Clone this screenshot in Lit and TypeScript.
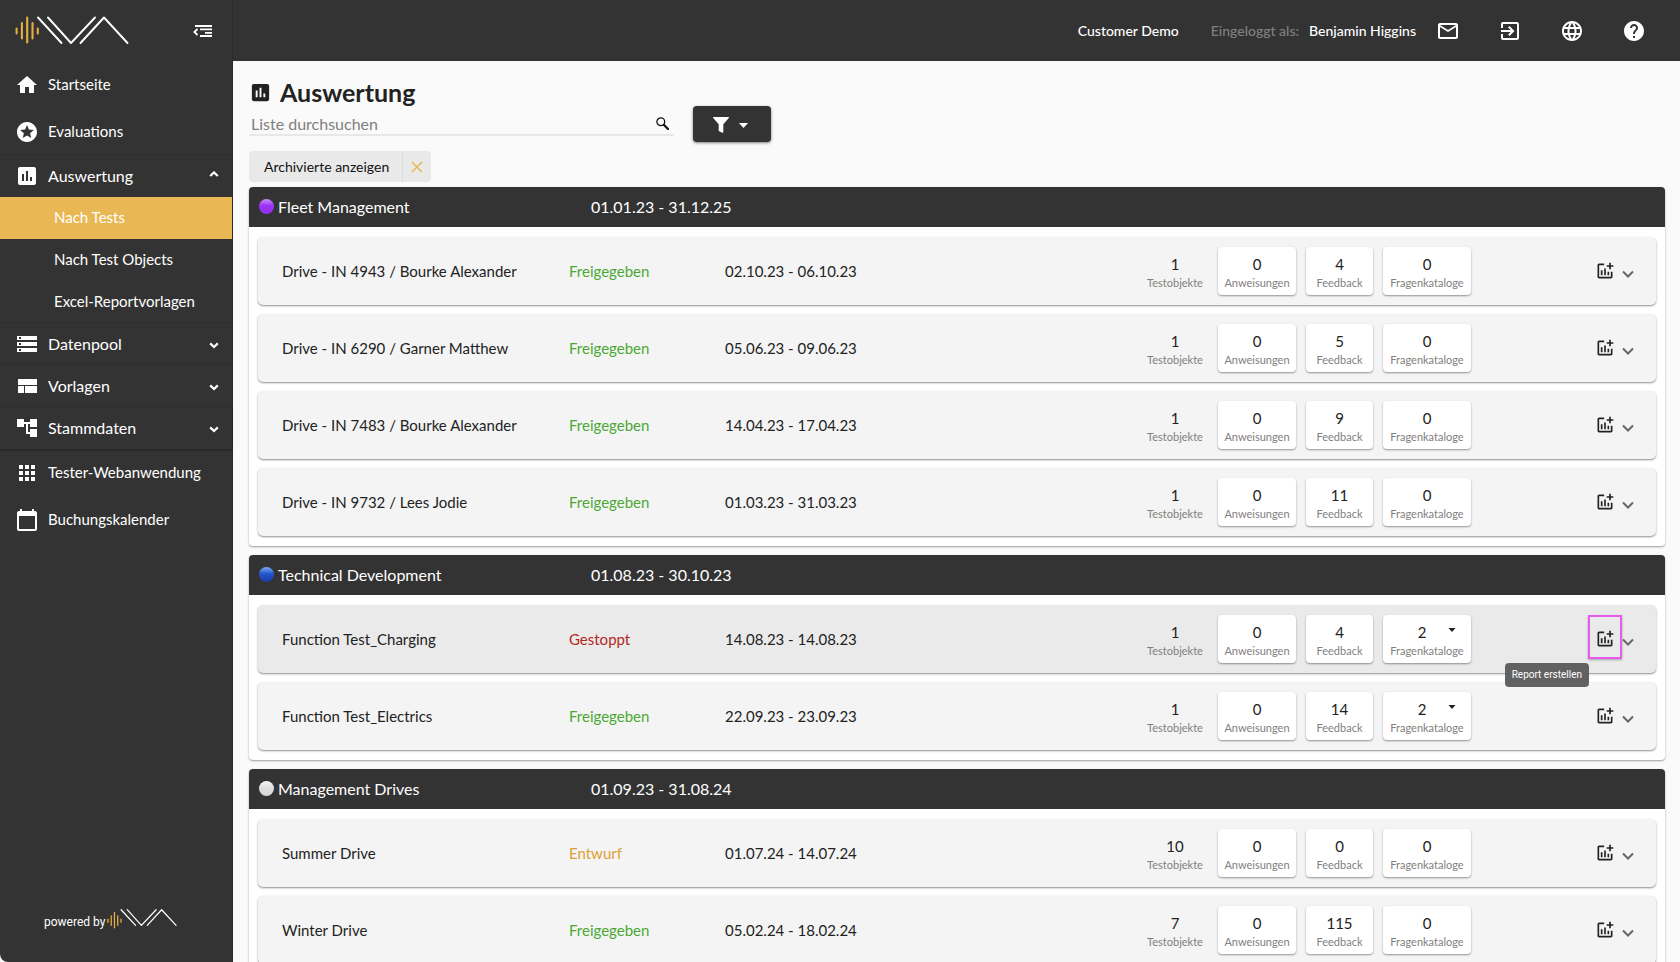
import { LitElement, html, svg, css, nothing } from "lit";
import { customElement, property } from "lit/decorators.js";
import { classMap } from "lit/directives/class-map.js";

const ICONS: Record<string, string> = {
  home: "M10 20v-6h4v6h5v-8h3L12 3 2 12h3v8z",
  stars:
    "M11.99 2C6.47 2 2 6.48 2 12s4.47 10 9.99 10C17.52 22 22 17.52 22 12S17.52 2 11.99 2zm4.24 16L12 15.45 7.77 18l1.12-4.81-3.73-3.23 4.92-.42L12 5l1.92 4.53 4.92.42-3.73 3.23L16.23 18z",
  assessment:
    "M19 3H5c-1.1 0-2 .9-2 2v14c0 1.1.9 2 2 2h14c1.1 0 2-.9 2-2V5c0-1.1-.9-2-2-2zM9 17H7v-7h2v7zm4 0h-2V7h2v10zm4 0h-2v-4h2v4z",
  storage:
    "M2 20h20v-4H2v4zm2-3h2v2H4v-2zM2 4v4h20V4H2zm4 3H4V5h2v2zm-4 7h20v-4H2v4zm2-3h2v2H4v-2z",
  layout: "M3 5h19v6H3zM3 12h6v7H3zM10 12h12v7H10z",
  tree: "M22 11V3h-7v3H9V3H2v8h7V8h2v10h4v3h7v-8h-7v3h-2V8h2v3z",
  apps: "M4 8h4V4H4v4zm6 12h4v-4h-4v4zm-6 0h4v-4H4v4zm0-6h4v-4H4v4zm6 0h4v-4h-4v4zm6-10v4h4V4h-4zm-6 4h4V4h-4v4zm6 6h4v-4h-4v4zm0 6h4v-4h-4v4z",
  calendar:
    "M20 3h-1V1h-2v2H7V1H5v2H4c-1.1 0-2 .9-2 2v16c0 1.1.9 2 2 2h16c1.1 0 2-.9 2-2V5c0-1.1-.9-2-2-2zm0 18H4V8h16v13z",
  mail: "M22 6c0-1.1-.9-2-2-2H4c-1.1 0-2 .9-2 2v12c0 1.1.9 2 2 2h16c1.1 0 2-.9 2-2V6zm-2 0l-8 5-8-5h16zm0 12H4V8l8 5 8-5v10z",
  exit: "M10.09 15.59L11.5 17l5-5-5-5-1.41 1.41L12.67 11H3v2h9.67l-2.58 2.59zM19 3H5c-1.11 0-2 .9-2 2v4h2V5h14v14H5v-4H3v4c0 1.1.89 2 2 2h14c1.1 0 2-.9 2-2V5c0-1.1-.9-2-2-2z",
  globe:
    "M11.99 2C6.47 2 2 6.48 2 12s4.47 10 9.99 10C17.52 22 22 17.52 22 12S17.52 2 11.99 2zm6.93 6h-2.95c-.32-1.25-.78-2.45-1.38-3.56 1.84.63 3.37 1.91 4.33 3.56zM12 4.04c.83 1.2 1.48 2.53 1.91 3.96h-3.82c.43-1.43 1.08-2.76 1.91-3.96zM4.26 14C4.1 13.36 4 12.69 4 12s.1-1.36.26-2h3.38c-.08.66-.14 1.32-.14 2 0 .68.06 1.34.14 2H4.26zm.82 2h2.95c.32 1.25.78 2.45 1.38 3.56-1.84-.63-3.37-1.9-4.33-3.56zm2.95-8H5.08c.96-1.66 2.49-2.93 4.33-3.56C8.81 5.55 8.35 6.75 8.03 8zM12 19.96c-.83-1.2-1.48-2.53-1.91-3.96h3.82c-.43 1.43-1.08 2.76-1.91 3.96zM14.34 14H9.66c-.09-.66-.16-1.32-.16-2 0-.68.07-1.35.16-2h4.68c.09.65.16 1.32.16 2 0 .68-.07 1.34-.16 2zm.25 5.56c.6-1.11 1.06-2.31 1.38-3.56h2.95c-.96 1.65-2.49 2.93-4.33 3.56zM16.36 14c.08-.66.14-1.32.14-2 0-.68-.06-1.34-.14-2h3.38c.16.64.26 1.31.26 2s-.1 1.36-.26 2h-3.38z",
  help: "M12 2C6.48 2 2 6.48 2 12s4.48 10 10 10 10-4.48 10-10S17.52 2 12 2zm1 17h-2v-2h2v2zm2.07-7.75l-.9.92C13.45 12.9 13 13.5 13 15h-2v-.5c0-1.1.45-2.1 1.17-2.83l1.24-1.26c.37-.36.59-.86.59-1.41 0-1.1-.9-2-2-2s-2 .9-2 2H8c0-2.21 1.79-4 4-4s4 1.79 4 4c0 .88-.36 1.68-.93 2.25z",
  addchart:
    "M22 5v2h-3v3h-2V7h-3V5h3V2h2v3h3zm-3 14H5V5h6V3H5c-1.1 0-2 .9-2 2v14c0 1.1.9 2 2 2h14c1.1 0 2-.9 2-2v-6h-2v6zm-4-6v4h2v-4h-2zm-4 4h2V9h-2v8zm-2 0v-6H7v6h2z",
};

const icon = (name: string, size = 24) => html`<svg
  width=${size}
  height=${size}
  viewBox="0 0 24 24"
  fill="currentColor"
  aria-hidden="true"
>
  <path d=${ICONS[name]}></path>
</svg>`;

const chevron = (up: boolean) => html`<svg
  width="10"
  height="10"
  viewBox="0 0 10 10"
  fill="none"
  stroke="currentColor"
  stroke-width="2.2"
  aria-hidden="true"
>
  <path d=${up ? "M1.2 5 5 1.4 8.8 5" : "M1.2 4.4 5 8 8.8 4.4"}></path>
</svg>`;

/** Brand mark: five sound bars followed by the zigzag strokes. */
const logo = (width: number, height: number, barShift: number, stroke: number) => html`<svg
  class="logo"
  width=${width}
  height=${height}
  viewBox="0 0 114 32"
  fill="none"
  stroke-linecap="round"
  stroke-linejoin="round"
  role="img"
  aria-label="Logo"
>
  ${svg`<g stroke="#e5ae43" stroke-width="2.1" transform="translate(0 ${barShift})">
    <path d="M1.6 13v5M6.9 7.500v15.500M12.200 2v25M17.500 7.500v15.500M22.800 13v5"></path>
  </g>
  <path stroke="#fff" stroke-width=${stroke} d="M23 2.500 46.500 28M33 2.500 56 28 80 2.500M65.500 28 89 2.500 112.500 28"></path>`}
</svg>`;

interface TestRow {
  name: string;
  status: "Freigegeben" | "Gestoppt" | "Entwurf";
  range: string;
  objects: number;
  instructions: number;
  feedback: number;
  catalogs: number;
  active?: boolean;
}

interface TestGroup {
  name: string;
  color: "purple" | "blue" | "white";
  range: string;
  rows: TestRow[];
}

const row = (
  name: string,
  status: TestRow["status"],
  range: string,
  objects: number,
  feedback: number,
  catalogs = 0,
  active = false
): TestRow => ({ name, status, range, objects, instructions: 0, feedback, catalogs, active });

const GROUPS: TestGroup[] = [
  {
    name: "Fleet Management",
    color: "purple",
    range: "01.01.23 - 31.12.25",
    rows: [
      row("Drive - IN 4943 / Bourke Alexander", "Freigegeben", "02.10.23 - 06.10.23", 1, 4),
      row("Drive - IN 6290 / Garner Matthew", "Freigegeben", "05.06.23 - 09.06.23", 1, 5),
      row("Drive - IN 7483 / Bourke Alexander", "Freigegeben", "14.04.23 - 17.04.23", 1, 9),
      row("Drive - IN 9732 / Lees Jodie", "Freigegeben", "01.03.23 - 31.03.23", 1, 11),
    ],
  },
  {
    name: "Technical Development",
    color: "blue",
    range: "01.08.23 - 30.10.23",
    rows: [
      row("Function Test_Charging", "Gestoppt", "14.08.23 - 14.08.23", 1, 4, 2, true),
      row("Function Test_Electrics", "Freigegeben", "22.09.23 - 23.09.23", 1, 14, 2),
    ],
  },
  {
    name: "Management Drives",
    color: "white",
    range: "01.09.23 - 31.08.24",
    rows: [
      row("Summer Drive", "Entwurf", "01.07.24 - 14.07.24", 10, 0),
      row("Winter Drive", "Freigegeben", "05.02.24 - 18.02.24", 7, 115),
    ],
  },
];

const shared = css`
  *,
  *::before,
  *::after {
    box-sizing: border-box;
  }
  button {
    font: inherit;
    color: inherit;
    background: none;
    border: 0;
    padding: 0;
    margin: 0;
    cursor: pointer;
  }
  a {
    color: inherit;
    text-decoration: none;
  }
  svg {
    display: block;
    flex: none;
  }
  ul {
    list-style: none;
    margin: 0;
    padding: 0;
  }
`;

@customElement("app-sidebar")
export class AppSidebar extends LitElement {
  static styles = [
    shared,
    css`
      :host {
        display: flex;
        flex-direction: column;
        background: #333;
        color: #fff;
        font-size: 15px;
        border-right: 1px solid #2a2a2a;
        border-bottom-left-radius: 8px;
      }
      .brand {
        display: flex;
        align-items: center;
        justify-content: space-between;
        height: 61px;
        padding: 0 20px 0 15px;
      }
      .item {
        display: flex;
        align-items: center;
        gap: 9px;
        width: 100%;
        height: 47px;
        padding: 0 13px 0 15px;
        text-align: left;
      }
      .text {
        flex: 1;
        padding-bottom: 2px;
      }
      .group {
        height: 42px;
        font-size: 16px;
        box-shadow: 0 -1px 1px rgba(0, 0, 0, 0.08);
      }
      .last {
        box-shadow: 0 -1px 1px rgba(0, 0, 0, 0.08), 0 2px 2px rgba(0, 0, 0, 0.25);
      }
      .sub {
        display: flex;
        align-items: center;
        height: 42px;
        padding: 0 0 2px 54px;
      }
      .current {
        background: #e9b855;
      }
      .powered {
        display: flex;
        align-items: flex-start;
        gap: 2px;
        margin-top: auto;
        padding: 0 0 26px 44px;
        font: 12px/28px Roboto, sans-serif;
      }
      .logo {
        overflow: visible;
      }
    `,
  ];

  private group(name: string, label: string, open = false, last = false) {
    return html`<button
      class=${classMap({ item: true, group: true, last })}
      aria-expanded=${open ? "true" : "false"}
    >
      ${icon(name)}<span class="text">${label}</span>${chevron(open)}
    </button>`;
  }

  private link(name: string, label: string) {
    return html`<a class="item" href="#">${icon(name)}<span class="text">${label}</span></a>`;
  }

  render() {
    return html`
      <div class="brand">
        ${logo(114, 32, 0.5, 1.9)}
        <button aria-label="Menü einklappen">
          <svg width="19" height="12" viewBox="0 0 19 12" fill="none" stroke="#fff" stroke-width="1.8">
            <path d="M2 1h17M7 4.400h12M12 7.800h7M7 11h12M4.500 4 1.400 7 4.500 10"></path>
          </svg>
        </button>
      </div>
      <nav>
        ${this.link("home", "Startseite")} ${this.link("stars", "Evaluations")}
        ${this.group("assessment", "Auswertung", true)}
        <a class="sub current" href="#" aria-current="page">Nach Tests</a>
        <a class="sub" href="#">Nach Test Objects</a>
        <a class="sub" href="#">Excel-Reportvorlagen</a>
        ${this.group("storage", "Datenpool")} ${this.group("layout", "Vorlagen")}
        ${this.group("tree", "Stammdaten", false, true)}
        ${this.link("apps", "Tester-Webanwendung")} ${this.link("calendar", "Buchungskalender")}
      </nav>
      <div class="powered"><span>powered by</span>${logo(70, 20, 5, 2)}</div>
    `;
  }
}

@customElement("app-topbar")
export class AppTopbar extends LitElement {
  static styles = [
    shared,
    css`
      :host {
        display: flex;
        align-items: center;
        justify-content: flex-end;
        height: 61px;
        padding-right: 34px;
        background: #333;
        color: #fff;
        font-size: 14px;
        font-weight: 500;
      }
      .user {
        display: flex;
        gap: 10px;
        margin: 0 20px 0 32px;
      }
      .muted {
        color: #808080;
      }
      .icons {
        display: flex;
        gap: 38px;
      }
    `,
  ];

  render() {
    return html`
      <span>Customer Demo</span>
      <div class="user"><span class="muted">Eingeloggt als:</span><span>Benjamin Higgins</span></div>
      <div class="icons">
        <button aria-label="Nachrichten">${icon("mail")}</button>
        <button aria-label="Abmelden">${icon("exit")}</button>
        <button aria-label="Sprache">${icon("globe")}</button>
        <button aria-label="Hilfe">${icon("help")}</button>
      </div>
    `;
  }
}

@customElement("test-group")
export class TestGroupElement extends LitElement {
  @property({ attribute: false }) group!: TestGroup;

  static styles = [
    shared,
    css`
      :host {
        display: block;
        background: #fff;
        border-radius: 4px;
        box-shadow: 0 1px 2px rgba(0, 0, 0, 0.38);
      }
      .head {
        display: grid;
        grid-template-columns: 312px 1fr;
        align-items: center;
        height: 40px;
        padding: 0 10px 2px;
        margin: 0;
        border-radius: 4px 4px 0 0;
        background: #333;
        color: #fff;
        font-size: 16px;
        font-weight: 400;
      }
      .title {
        display: flex;
        align-items: center;
        gap: 4px;
        margin: 0;
        font: inherit;
      }
      .head > span {
        padding-left: 20px;
      }
      .dot {
        width: 15px;
        height: 15px;
        border-radius: 50%;
      }
      .purple {
        background: linear-gradient(#c98df7, #9a33f5 45%, #9530f0);
      }
      .blue {
        background: linear-gradient(#7fb0f0, #2257d0 45%, #1b3aa5);
      }
      .white {
        background: linear-gradient(#f6f6f6, #dedede 45%, #d6d6d6);
      }
      .rows {
        display: flex;
        flex-direction: column;
        gap: 9px;
        padding: 10px 9px;
      }
      .row {
        display: grid;
        grid-template-columns: 287px 156px 1fr auto 185px;
        align-items: center;
        height: 68px;
        padding-left: 24px;
        border-radius: 5px;
        background: #f4f4f4;
        color: #222;
        font-size: 15px;
        box-shadow: 0 1px 2px rgba(0, 0, 0, 0.45);
      }
      .active {
        background: #eaeaea;
      }
      .freigegeben {
        color: #4ba834;
      }
      .gestoppt {
        color: #b5281e;
      }
      .entwurf {
        color: #dda032;
      }
      .stats {
        display: grid;
        grid-template-columns: 66px 78px 67px 88px;
        gap: 10px;
      }
      .stat {
        display: flex;
        flex-direction: column;
        align-items: center;
        height: 48px;
        padding-top: 8px;
        border-radius: 4px;
      }
      .card {
        background: #fff;
        box-shadow: 0 1px 2px rgba(0, 0, 0, 0.4);
      }
      .value {
        display: flex;
        align-items: flex-start;
        gap: 22px;
        line-height: 18px;
      }
      .caret {
        margin: 5px 2px 0 0;
      }
      .label {
        font-size: 11px;
        line-height: 20px;
        color: #808080;
      }
      .actions {
        display: flex;
        align-items: center;
        justify-content: flex-end;
        padding-right: 22px;
      }
      .report {
        position: relative;
        display: grid;
        place-items: center;
        width: 34px;
        height: 40px;
      }
      .frame {
        position: absolute;
        inset: -4px 0 0 0;
        border: 2px solid #e65aec;
        box-shadow: 0 1px 2px rgba(0, 0, 0, 0.3);
      }
      .tip {
        position: absolute;
        top: 44px;
        right: 33px;
        padding: 0 7px;
        border-radius: 4px;
        background: #616161;
        color: #fff;
        font: 10px/24px Roboto, sans-serif;
        white-space: nowrap;
        z-index: 1;
      }
      .toggle {
        padding-top: 6px;
        color: #666;
      }
    `,
  ];

  private stat(value: number, label: string, menu = false) {
    return html`<button class="stat card">
      <span class="value"
        >${menu ? html`<span></span>` : nothing}${value}${menu
          ? html`<svg class="caret" width="8" height="5" viewBox="0 0 8 5" aria-hidden="true">
              <path d="M.5 0h7L4 4z" fill="#222"></path>
            </svg>`
          : nothing}</span
      >
      <span class="label">${label}</span>
    </button>`;
  }

  private renderRow(r: TestRow) {
    return html`<li class=${classMap({ row: true, active: !!r.active })}>
      <span>${r.name}</span>
      <span class=${r.status.toLowerCase()}>${r.status}</span>
      <span>${r.range}</span>
      <div class="stats">
        <div class="stat">
          <span class="value">${r.objects}</span><span class="label">Testobjekte</span>
        </div>
        ${this.stat(r.instructions, "Anweisungen")} ${this.stat(r.feedback, "Feedback")}
        ${this.stat(r.catalogs, "Fragenkataloge", r.catalogs > 0)}
      </div>
      <div class="actions">
        <button class="report" aria-label="Report erstellen">
          ${icon("addchart", 20)}
          ${r.active
            ? html`<span class="frame"></span><span class="tip" role="tooltip">Report erstellen</span>`
            : nothing}
        </button>
        <button class="toggle" aria-label="Aufklappen">
          <svg width="12" height="8" viewBox="0 0 12 8" fill="none" stroke="currentColor" stroke-width="2">
            <path d="M1 1.500 6 6.500 11 1.500"></path>
          </svg>
        </button>
      </div>
    </li>`;
  }

  render() {
    const g = this.group;
    return html`
      <header class="head">
        <h2 class="title"><i class="dot ${g.color}"></i>${g.name}</h2>
        <span>${g.range}</span>
      </header>
      <ul class="rows">
        ${g.rows.map((r) => this.renderRow(r))}
      </ul>
    `;
  }
}

@customElement("app-root")
export class AppRoot extends LitElement {
  static styles = [
    shared,
    css`
      :host {
        display: grid;
        grid-template-columns: 233px minmax(0, 1fr);
        grid-template-rows: auto minmax(0, 1fr);
        height: 100vh;
        overflow: hidden;
        background: #fafafa;
        font-family: Lato, "Noto Sans", sans-serif;
        color: #222;
      }
      .side {
        grid-row: 1 / 3;
      }
      .main {
        overflow: auto;
        scrollbar-width: none;
        padding: 17px 15px 16px 16px;
      }
      .heading {
        display: flex;
        align-items: center;
        gap: 8px;
        margin: 0;
        font-size: 25px;
        line-height: 28px;
        font-weight: 700;
      }
      .tools {
        display: flex;
        align-items: flex-start;
        gap: 19px;
      }
      .search {
        display: flex;
        align-items: center;
        width: 425px;
        height: 30px;
        padding: 6px 5px 0 2px;
        border-bottom: 2px solid #e8e8e8;
      }
      .field {
        flex: 1;
        min-width: 0;
        border: 0;
        padding: 0;
        outline: 0;
        background: none;
        font: inherit;
        font-size: 16px;
      }
      .field::placeholder {
        color: #808080;
        opacity: 1;
      }
      .filter {
        display: flex;
        align-items: center;
        justify-content: center;
        gap: 10px;
        width: 78px;
        height: 36px;
        padding: 2px 3px 0 0;
        border-radius: 4px;
        background: #333;
        color: #fff;
        box-shadow: 0 1px 3px rgba(0, 0, 0, 0.5);
      }
      .chip {
        display: inline-flex;
        align-items: center;
        height: 31px;
        margin: 9px 0 5px;
        border-radius: 4px;
        background: #e9e9e9;
        color: #111;
        font-size: 14px;
        vertical-align: top;
      }
      .chip span {
        padding: 0 13px 0 15px;
      }
      .remove {
        display: grid;
        place-items: center;
        width: 29px;
        height: 31px;
        border-left: 1px solid #dcdcdc;
      }
      .groups {
        display: flex;
        flex-direction: column;
        gap: 9px;
      }
    `,
  ];

  render() {
    return html`
      <app-sidebar class="side"></app-sidebar>
      <app-topbar></app-topbar>
      <main class="main">
        <h1 class="heading">${icon("assessment", 23)}<span>Auswertung</span></h1>
        <div class="tools">
          <label class="search">
            <input class="field" type="text" placeholder="Liste durchsuchen" aria-label="Liste durchsuchen" />
            <svg width="13" height="13" viewBox="0 0 13 13" fill="none" stroke="#111" aria-hidden="true">
              <circle cx="4.800" cy="4.800" r="3.900" stroke-width="1.300"></circle>
              <path d="M7.800 7.800 12 12" stroke-width="2.200" stroke-linecap="round"></path>
            </svg>
          </label>
          <button class="filter" aria-label="Filter">
            <svg width="16" height="16" viewBox="0 0 16 16" fill="currentColor" aria-hidden="true">
              <path d="M.6 0h14.800c.6 0 .8.600.4 1L10.300 7.300V15c0 .7-.5 1-1 .8L6.200 14.300c-.4-.2-.5-.4-.5-.8V7.300L.2 1C-.2.600 0 0 .6 0z"></path>
            </svg>
            <svg width="9" height="5" viewBox="0 0 9 5" fill="currentColor" aria-hidden="true">
              <path d="M0 0h9L4.500 5z"></path>
            </svg>
          </button>
        </div>
        <div class="chip">
          <span>Archivierte anzeigen</span>
          <button class="remove" aria-label="Filter entfernen">
            <svg width="12" height="12" viewBox="0 0 12 12" stroke="#e9b855" stroke-width="1.600">
              <path d="M1 1 11 11M11 1 1 11"></path>
            </svg>
          </button>
        </div>
        <div class="groups">
          ${GROUPS.map((g) => html`<test-group .group=${g}></test-group>`)}
        </div>
      </main>
    `;
  }
}
